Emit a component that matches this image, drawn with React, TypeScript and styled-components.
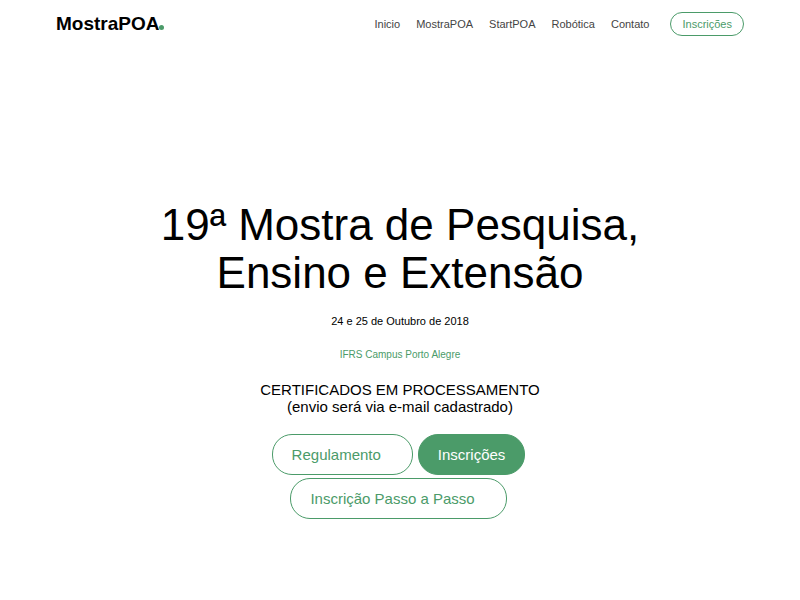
import React from "react";
import styled, { createGlobalStyle } from "styled-components";

const GREEN = "#4b9b69";

const GlobalStyle = createGlobalStyle`
  *, *::before, *::after { box-sizing: border-box; }
  body {
    margin: 0;
    background: #fff;
    color: #000;
    font-family: "Liberation Sans", Arial, sans-serif;
  }
`;

const Page = styled.div`
  display: flex;
  flex-direction: column;
  min-height: 100vh;
`;

const Header = styled.header`
  display: flex;
  align-items: center;
  justify-content: space-between;
  padding: 12px 56px;
`;

const Brand = styled.a`
  display: flex;
  align-items: baseline;
  color: #000;
  font-size: 19px;
  font-weight: 700;
  line-height: 24px;
  text-decoration: none;
`;

const BrandDot = styled.span`
  width: 5px;
  height: 5px;
  border-radius: 50%;
  background: ${GREEN};
`;

const Nav = styled.nav`
  display: flex;
  align-items: center;
  gap: 16px;
`;

const NavLink = styled.a`
  color: #444;
  font-size: 11px;
  line-height: 16px;
  text-decoration: none;
`;

const Button = styled.a<{ $filled?: boolean; $wide?: boolean }>`
  display: inline-flex;
  align-items: center;
  height: 41px;
  padding: 0 ${(p) => (p.$wide ? 31 : 19)}px 0 19px;
  border: 1px solid ${GREEN};
  border-radius: 20px;
  background: ${(p) => (p.$filled ? GREEN : "transparent")};
  color: ${(p) => (p.$filled ? "#fff" : GREEN)};
  font-size: 15px;
  text-decoration: none;
`;

const NavButton = styled(Button)`
  height: 24px;
  margin-left: 5px;
  padding: 0 11px;
  border-radius: 12px;
  font-size: 11px;
`;

const Hero = styled.main`
  display: flex;
  flex-direction: column;
  align-items: center;
  padding: 153px 56px 80px;
  text-align: center;
`;

const Title = styled.h1`
  max-width: 520px;
  margin: 0;
  font-size: 44px;
  font-weight: 400;
  line-height: 48px;
`;

const DateLine = styled.p`
  margin: 16px 0 0;
  font-size: 11px;
  line-height: 16px;
`;

const Venue = styled.a`
  margin-top: 18px;
  color: ${GREEN};
  font-size: 10px;
  line-height: 16px;
  text-decoration: none;
`;

const Notice = styled.p`
  margin: 18px 0 0;
  font-size: 15px;
  line-height: 17px;
`;

const Actions = styled.div`
  display: flex;
  flex-wrap: wrap;
  justify-content: center;
  gap: 3px 5px;
  max-width: 290px;
  margin-top: 19px;
  padding-right: 3px;
`;

const links = ["Inicio", "MostraPOA", "StartPOA", "Robótica", "Contato"];

export default function App() {
  return (
    <Page>
      <GlobalStyle />
      <Header>
        <Brand href="#">
          MostraPOA
          <BrandDot />
        </Brand>
        <Nav>
          {links.map((label) => (
            <NavLink key={label} href="#">{label}</NavLink>
          ))}
          <NavButton href="#">Inscrições</NavButton>
        </Nav>
      </Header>
      <Hero>
        <Title>19ª Mostra de Pesquisa, Ensino e Extensão</Title>
        <DateLine>24 e 25 de Outubro de 2018</DateLine>
        <Venue href="#">IFRS Campus Porto Alegre</Venue>
        <Notice>
          CERTIFICADOS EM PROCESSAMENTO
          <br />
          (envio será via e-mail cadastrado)
        </Notice>
        <Actions>
          <Button href="#" $wide>Regulamento</Button>
          <Button href="#" $filled>Inscrições</Button>
          <Button href="#" $wide>Inscrição Passo a Passo</Button>
        </Actions>
      </Hero>
    </Page>
  );
}
